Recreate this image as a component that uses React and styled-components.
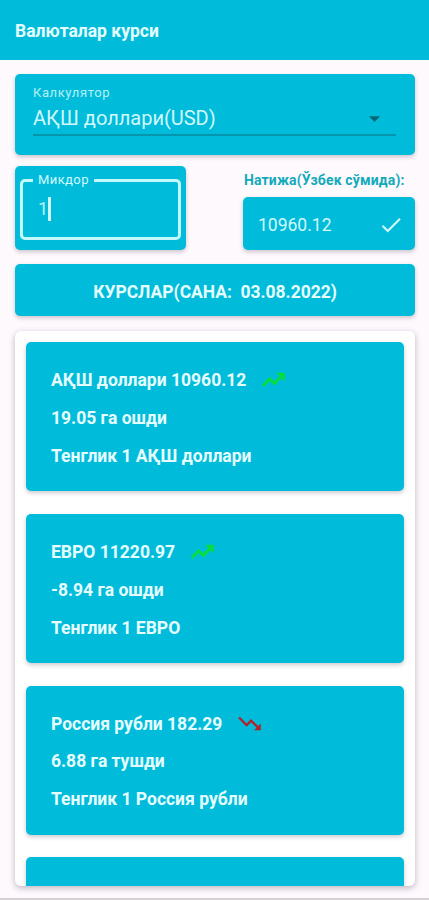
import React, { useState } from 'react'

import styled, { createGlobalStyle } from 'styled-components'
import { MdArrowDropDown, MdCheck, MdTrendingDown } from 'react-icons/md'

const rates = [
    { id: 'USD', name: 'АҚШ доллари', rate: '10960.12', diff: '19.05 га ошди', up: true },
    { id: 'EUR', name: 'ЕВРО', rate: '11220.97', diff: '-8.94 га ошди', up: true },
    { id: 'RUB', name: 'Россия рубли', rate: '182.29', diff: '6.88 га тушди', up: false },
    { id: 'GBP' },
]

// bolder than the material one
const TrendUpIcon = () => (
    <svg viewBox="0 0 24 24" fill="none">
        <path d="M2.5 17.7l6.2-6.2 4 4 6-6" stroke="currentColor" strokeWidth="2.7" />
        <path d="M15.5 6.5H21.5v6z" fill="currentColor" stroke="currentColor" strokeWidth="1.2" strokeLinejoin="round" />
    </svg>
)

const RateCard = ({ item }) => {
    if (!item.name) return <Card />

    return (
        <Card>
            <CardLine>
                <span>{item.name} {item.rate}</span>
                <Trend $up={item.up}>
                    {item.up ? <TrendUpIcon /> : <MdTrendingDown />}
                </Trend>
            </CardLine>
            <CardLine>{item.diff}</CardLine>
            <CardLine>Тенглик 1 {item.name}</CardLine>
        </Card>
    )
}

const App = () => {
    const [amount] = useState('1')

    return (
        <>
            <GlobalStyle />
            <Screen>
                <Header>
                    <Title>Валюталар курси</Title>
                </Header>
                <Content>
                    <Calculator>
                        <SelectLabel>Калкулятор</SelectLabel>
                        <Select>
                            <span>АҚШ доллари(USD)</span>
                            <MdArrowDropDown />
                        </Select>
                    </Calculator>
                    <Fields>
                        <AmountCard>
                            <AmountField>
                                <Legend>Микдор</Legend>
                                <Amount>{amount}<Caret /></Amount>
                            </AmountField>
                        </AmountCard>
                        <Result>
                            <ResultLabel>Натижа(Ўзбек сўмида):</ResultLabel>
                            <ResultCard>
                                <span>10960.12</span>
                                <MdCheck />
                            </ResultCard>
                        </Result>
                    </Fields>
                    <DateButton>КУРСЛАР(САНА:&nbsp; 03.08.2022)</DateButton>
                    <List>
                        {rates.map((item) => (
                            <RateCard key={item.id} item={item} />
                        ))}
                    </List>
                </Content>
            </Screen>
        </>
    )
}

const GlobalStyle = createGlobalStyle`
    * {
        box-sizing: border-box;
    }

    body {
        margin: 0;
        background: #fdf9fd;
        font-family: Roboto, "Noto Sans", sans-serif;
        color: #e6fdff;
    }
`

const Screen = styled.div`
    height: 900px;
    display: flex;
    flex-direction: column;
    overflow: hidden;
    border-bottom: 2px solid #d3cfd2;
`

const Header = styled.header`
    height: 60px;
    flex: none;
    display: flex;
    align-items: center;
    padding: 1px 15px 0;
    background: #00bcda;
`

const Title = styled.h1`
    margin: 0;
    font-size: 17.5px;
    font-weight: 700;
`

const Content = styled.main`
    flex: 1;
    min-height: 0;
    display: flex;
    flex-direction: column;
    padding: 14px 14px 12px 15px;
`

const Panel = styled.div`
    background: #00bcda;
    border-radius: 5px;
    box-shadow: 0 2px 4px rgba(60, 40, 60, 0.25);
`

const Calculator = styled(Panel)`
    height: 81px;
    flex: none;
    padding: 11px 19px 0 18px;
`

const SelectLabel = styled.div`
    font-size: 13px;
    line-height: 16px;
    letter-spacing: 0.6px;
    color: #b5f0f8;
`

const Select = styled.div`
    height: 35px;
    display: flex;
    align-items: center;
    justify-content: space-between;
    padding: 1px 8px 0 0;
    border-bottom: 2px solid #0595ac;
    font-size: 20px;
    color: #d2f8fc;

    svg {
        width: 27px;
        height: 27px;
        color: #086878;
    }
`

const Fields = styled.div`
    display: flex;
    justify-content: space-between;
    margin-top: 11px;
`

const AmountCard = styled(Panel)`
    width: 171px;
    height: 84px;
    padding: 5px 5px 10px;
`

const AmountField = styled.fieldset`
    height: 69px;
    margin: 0;
    padding: 0 15px;
    border: 3px solid #c4f9fc;
    border-radius: 5px;
`

const Legend = styled.legend`
    margin-left: -5px;
    padding: 0 5px;
    font-size: 13px;
    line-height: 18px;
    letter-spacing: 0.4px;
    color: #d2f8fc;
`

const Amount = styled.div`
    display: flex;
    align-items: center;
    margin-top: 8px;
    font-size: 18px;
    line-height: 24px;
    color: #b5f0f8;
`

const Caret = styled.span`
    width: 3px;
    height: 24px;
    background: #d2f8fc;
`

const Result = styled.div`
    width: 172px;
    display: flex;
    flex-direction: column;
    justify-content: space-between;
`

const ResultLabel = styled.div`
    padding: 5px 0 0 1px;
    font-size: 14px;
    line-height: 18px;
    font-weight: 700;
    letter-spacing: 0.15px;
    white-space: nowrap;
    color: #12aabb;
`

const ResultCard = styled(Panel)`
    height: 53px;
    display: flex;
    align-items: center;
    justify-content: space-between;
    padding: 2px 11px 0 15px;
    font-size: 17.5px;
    color: #d2f8fc;

    svg {
        width: 26px;
        height: 26px;
    }
`

const DateButton = styled(Panel).attrs({ as: 'button' })`
    height: 52px;
    flex: none;
    margin-top: 14px;
    padding-top: 4px;
    border: 0;
    font-family: inherit;
    font-size: 17.45px;
    font-weight: 700;
    color: inherit;
`

const List = styled.section`
    flex: 1;
    min-height: 0;
    display: flex;
    flex-direction: column;
    gap: 22.8px;
    margin-top: 15px;
    padding: 11px 11px 0;
    overflow: hidden;
    background: #fff;
    border-radius: 6px;
    box-shadow: 0 2px 6px rgba(60, 40, 60, 0.32);
`

const Card = styled(Panel)`
    height: 149px;
    flex: none;
    padding: 19px 25px;
`

const CardLine = styled.div`
    height: 37.9px;
    display: flex;
    align-items: center;
    font-size: 17.5px;
    font-weight: 700;
    white-space: nowrap;
`

const Trend = styled.span`
    display: flex;
    margin-left: 14px;
    color: ${({ $up }) => ($up ? '#08dc43' : '#b4202a')};

    svg {
        width: 27px;
        height: 27px;
    }
`

export default App
